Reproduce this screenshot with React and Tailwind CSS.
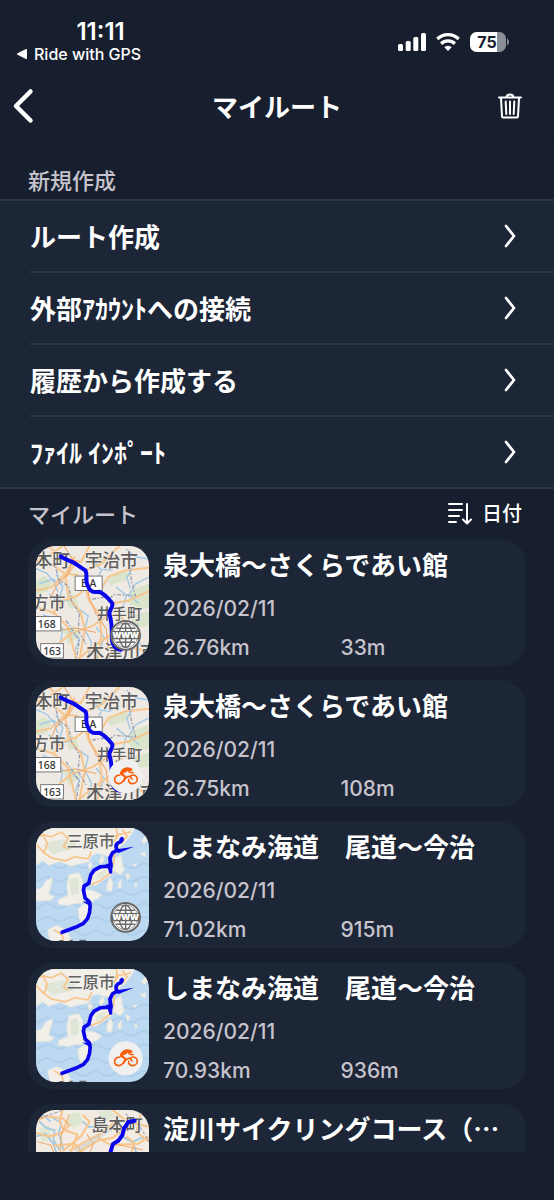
import { useId, useState } from 'react';

const createItems = [
  'ルート作成',
  '外部ｱｶｳﾝﾄへの接続',
  '履歴から作成する',
  'ﾌｧｲﾙ ｲﾝﾎﾟｰﾄ',
];

const routes = [
  {
    id: 1,
    name: '泉大橋〜さくらであい館',
    date: '2026/02/11',
    distance: '26.76km',
    climb: '33m',
    map: 'kizu',
    source: 'web',
  },
  {
    id: 2,
    name: '泉大橋〜さくらであい館',
    date: '2026/02/11',
    distance: '26.75km',
    climb: '108m',
    map: 'kizu',
    source: 'bike',
  },
  {
    id: 3,
    name: 'しまなみ海道　尾道〜今治',
    date: '2026/02/11',
    distance: '71.02km',
    climb: '915m',
    map: 'shimanami',
    source: 'web',
  },
  {
    id: 4,
    name: 'しまなみ海道　尾道〜今治',
    date: '2026/02/11',
    distance: '70.93km',
    climb: '936m',
    map: 'shimanami',
    source: 'bike',
  },
  {
    id: 5,
    name: '淀川サイクリングコース（…',
    map: 'yodo',
  },
];

function StatusBar() {
  return (
    <div className="flex items-start justify-between pt-4.5 pl-4 pr-11 font-['Inter','Noto_Sans_CJK_JP',sans-serif]">
      <div className="flex flex-col">
        <span className="text-center pl-11 text-2xl leading-7 font-semibold">11:11</span>
        <a href="#back-to-app" className="flex items-center gap-1.5 text-base leading-4 font-medium">
          <svg className="w-3 h-3" viewBox="0 0 12 12" fill="currentColor" aria-hidden="true">
            <path d="M1.500 5.200 10 1.100q1-.4 1 .7v8.400q0 1.100-1 .7L1.500 6.800q-1.300-.8 0-1.600z" />
          </svg>
          Ride with GPS
        </a>
      </div>
      <div className="flex items-center gap-2.5 pt-3.5">
        <svg className="w-7 h-5" viewBox="0 0 28 20" fill="currentColor" aria-hidden="true">
          <rect x="0" y="12" width="5" height="7" rx="1.500" />
          <rect x="7.700" y="9" width="5" height="10" rx="1.500" />
          <rect x="15.300" y="5" width="5" height="14" rx="1.500" />
          <rect x="23" y="1" width="5" height="18" rx="1.500" />
        </svg>
        <svg className="w-6 h-5" viewBox="0 0 24 20" fill="none" stroke="currentColor" strokeWidth="3.400" aria-hidden="true">
          <path d="M1.300 7a15.200 15.200 0 0 1 21.400 0" />
          <path d="M5.200 11.700a9.600 9.600 0 0 1 13.600 0" />
          <path d="M12 18.900 8.300 15.200a5.300 5.300 0 0 1 7.400 0z" fill="currentColor" stroke="none" />
        </svg>
        <svg className="w-10 h-5" viewBox="0 0 40 20" aria-hidden="true">
          <path d="M27 0h2.500a6.500 6.500 0 0 1 6.500 6.500v7a6.500 6.500 0 0 1-6.500 6.500H27z" fill="#8b8f98" />
          <path d="M6.500 0H27v20H6.500A6.500 6.500 0 0 1 0 13.500v-7A6.500 6.500 0 0 1 6.500 0z" fill="#fff" />
          <path d="M37 6.500q2 1 2 3.500t-2 3.500z" fill="#8b8f98" />
          <text x="17" y="16" textAnchor="middle" fontSize="16" fontWeight="700" fill="#171f2f">
            75
          </text>
        </svg>
      </div>
    </div>
  );
}

function Header() {
  return (
    <header className="flex items-center justify-between h-16 px-3 mt-3">
      <button type="button" aria-label="戻る" className="w-12">
        <svg className="w-6 h-9" viewBox="0 0 24 36" fill="none" stroke="currentColor" strokeWidth="4.500" strokeLinecap="round" strokeLinejoin="round">
          <path d="M18.500 3.500 4 18l14.500 14.500" />
        </svg>
      </button>
      <h1 className="text-[26px] leading-9 font-bold">マイルート</h1>
      <button type="button" aria-label="削除" className="flex justify-end w-12 pr-5">
        <svg className="w-6 h-6.5 shrink-0" viewBox="0 0 24 26" fill="none" stroke="currentColor" strokeWidth="2" strokeLinecap="round" strokeLinejoin="round">
          <path d="M1 4.500h22M8.500 4c.5-3.500 6.500-3.500 7 0M3 5l1 18.500q.1 1 1.200 1h13.600q1.100 0 1.200-1L21 5" />
          <path d="m7.700 8.500.6 12.500M12 8.500V21M16.300 8.500 15.700 21" />
        </svg>
      </button>
    </header>
  );
}

function CreateRow({ label, last }) {
  return (
    <li className="pl-7.5">
      <button
        type="button"
        className={`flex items-center justify-between w-full pr-9.5 text-[26px] leading-9 font-bold text-left ${
          last ? 'h-17.5' : 'h-18 border-b-2 border-[#2b3646]'
        }`}
      >
        {label}
        <svg className="w-3 h-6" viewBox="0 0 12 24" fill="none" stroke="currentColor" strokeWidth="2.800" strokeLinecap="round" strokeLinejoin="round" aria-hidden="true">
          <path d="M2 2l8 10-8 10" />
        </svg>
      </button>
    </li>
  );
}

function RoadSign({ x, y, width, label }) {
  return (
    <g>
      <rect x={x} y={y} width={width} height="43" fill="#fff" stroke="#777" strokeWidth="3" />
      <text x={x + width / 2} y={y + 33} textAnchor="middle" fontSize="31" fontWeight="500" fill="#333" fontFamily="Noto Sans">
        {label}
      </text>
    </g>
  );
}

function KizuMap() {
  return (
    <g>
      <rect x="50" y="47" width="338" height="338" fill="#efe9e3" />
      <g fill="#d9e4cb">
        <path d="M262 150l40-28 36 8-20 20-46 14zM330 180l58-20v70l-40 10-24-26zM50 150l24-14 24 20-16 28-32 8zM214 86l30-12 18 20-30 18zM130 296l34-10 18 30-34 26z" />
        <path d="M330 256l58-12v40l-40 8zM140 190l30 6 8 34-30 4z" />
      </g>
      <g fill="none" stroke="#9fc8e6" strokeWidth="4">
        <path d="M50 114l34 16 20 26 12 30M110 130l20 40-12 40M60 160l40-14 30 20M222 92l20 24 30 4 26-20M246 120l-16 30 14 20" />
        <path d="M320 56l30 24 38 6M340 110l-18 30 10 34M388 140l-40 20-20 34 30 26M290 170l30 24-8 30M70 252l40 14 20 30-10 60" />
        <path d="M180 236l26 20-10 40 20 40-12 50M150 300l30 24-14 40M356 280l-18 24 26 40 24 8M230 290l24 30-14 40M88 190l30 26 34-8" />
      </g>
      <g fill="none" stroke="#f6c68e" strokeWidth="6">
        <path d="M50 92l44-20 36-25M86 47l44 36 54 12 26-48M50 180l46-10 44-42 26-50M168 98l-30 44 10 60 36 44 12 52-16 87" />
        <path d="M198 120l44-18 58-55M206 168l-36 30-46 14-24 40M192 150l16 60 30 40 8 60-12 75M278 218l50-8 60-28M240 184l26-44 50-20 72-8" />
        <path d="M50 230l54 16 42 44 24 95M270 252l-50 34-60 20-40 30M277 310l-60 40-40 35M300 250l30 50-8 50 66 10M96 100l40 30 40 4" />
      </g>
      <g fill="none" stroke="#f0a463" strokeWidth="3">
        <path d="M134 47l26 40-12 40-38 40-18 40M160 87l40 34 8 76 22 54 30 44 10 90M110 300l60-8 60 14" />
      </g>
      <g fill="none" stroke="#9c9db2" strokeWidth="4" strokeDasharray="12 5 4 5">
        <path d="M104 92l14 56 30 20 8 42 24 40-4 50 24 40M330 112l6 40 12 44-64-4-18 14M140 270l40 60-10 55M350 300l-26 40M218 206l50-8" />
      </g>
      <g fill="#5e5e5e" fontSize="53" fontWeight="500" fontFamily="Noto Sans CJK JP" stroke="#f6f3ef" strokeWidth="3" paintOrder="stroke">
        <text x="46" y="109">本町</text>
        <text x="196" y="109">宇治市</text>
        <text x="38" y="234" fontSize="50">方市</text>
        <text x="232" y="264" fontSize="45">井手町</text>
        <text x="200" y="382" fontSize="54">木津川市</text>
      </g>
      <RoadSign x={167} y={137} width={81} label="E A" />
      <RoadSign x={40} y={258} width={84} label="168" />
      <RoadSign x={64} y={339} width={68} label="163" />
      <path
        d="M124 78C140 90 156 92 168 100S188 114 198 120C206 136 194 148 206 168 210 182 222 187 240 184 256 190 268 206 278 218 282 232 266 240 270 252S277 290 277 315C275 340 286 356 304 357"
        fill="none"
        stroke="#0a05ea"
        strokeWidth="12"
        strokeLinecap="round"
        strokeLinejoin="round"
      />
    </g>
  );
}

function ShimanamiMap() {
  return (
    <g transform="translate(0 5)">
      <rect x="50" y="42" width="338" height="338" fill="#bdd9f1" />
      <g fill="none" stroke="#afcfea" strokeWidth="6">
        {[155, 195, 235, 275, 315, 355].map((y) => (
          <path key={y} d={`M30 ${y}q18 14 36 0t36 0q18 14 36 0t36 0q18 14 36 0t36 0q18 14 36 0t36 0q18 14 36 0t36 0`} />
        ))}
      </g>
      <g fill="#f1efe7" stroke="#e3e4dc" strokeWidth="2">
        <path d="M50 42h296l-12 22-20 24-28 22-16 18-36-10-18 6-8 20-56 12-30-14-34 12-18-14-20 14z" />
        <path d="M50 226l16-4 14-22 20-10-4 20-8 30 18 8-14 10-42 2z" />
        <path d="M148 182l30-6 12 22-4 30 12 16-6 22-24 2-24 6-28-4 2-14 28-12-4-26z" />
        <path d="M214 190l14-20 30-10 26 2-4 16-30 22-22 14-18-4zM284 134l20-12 4 24 6 22-12 14-20-12z" />
        <path d="M196 226l28 4 22 12-8 10-22 10-18-14zM176 282l20-14 20 10 0 24-12 16-18 14-8-24z" />
        <path d="M262 210l10-22 8 18-4 26-14-4zM296 206l10-10-2 28-8-4zM318 178l14 6-8 16zM338 152l14-4-4 10zM362 120l14-8 2 16zM205 152l8-8 6 8-8 14z" />
        <path d="M84 346l28-12 30 14 16 32H92zM366 78l12-12 6 14-12 8zM238 142l12-20 4 18-10 12zM346 208l6 0v10h-6z" />
      </g>
      <path d="M150 196l22-8 8 20-4 30-20 6zM70 90l60-14 40 10-10 20-60 14zM232 178l30-10-8 20-24 10z" fill="#dfe6d8" />
      <g fill="none" stroke="#f8c48a" strokeWidth="5">
        <path d="M50 90l24 26 24 16 40 8 28-12 40 6 10-22M50 72l20-10 26 6 30-14 20 20-14 22 14 10M74 116l10-28-14-26" />
        <path d="M270 74l24-12 40-8M290 42l4 24-14 20M308 46l14 20-16 22M212 212l30-12 36-28M296 92l-12 28-2 34M196 326l12-22M104 346l24 16 4 16" />
      </g>
      <text x="142" y="100" fontSize="48" fontWeight="500" fill="#626262" fontFamily="Noto Sans CJK JP" stroke="#f6f3ef" strokeWidth="3" paintOrder="stroke">
        三原市
      </text>
      <path
        d="M307 74l-4 9c-12 3-18 12-10 25l-14 8-8 16 3 24-32 2-18 10-10 14-6 25-14 9-2 12 5 24 12 10 3 14-2 20-6 17-12 14-24 12-40 15"
        fill="none"
        stroke="#0a05ea"
        strokeWidth="11"
        strokeLinecap="round"
        strokeLinejoin="round"
      />
      <path d="M343 98l-46 7-8 7 8 5zM259 150l20-4-1 32-8 1-4-13zM188 262l28 2-2 12z" fill="#0a05ea" />
      <path d="M300 72l12 0 0 10-10 4z" fill="#0a05ea" />
      <g stroke="#666" strokeWidth="4">
        <path d="M120 379h12M150 378h10M180 378h20" />
      </g>
    </g>
  );
}

function YodoMap() {
  return (
    <g transform="translate(0 -418)">
      <rect x="50" y="465" width="338" height="338" fill="#f1ebe4" />
      <g fill="#dde6d0">
        <path d="M148 480l30-10 14 34-26 12-26-4zM234 470l36-5 18 20-34 14zM60 520l30-8 6 40-30 10z" />
      </g>
      <g fill="none" stroke="#9fc8e2" strokeWidth="5">
        <path d="M50 544l28-8 24 30 10 30M60 500l20 18 26 8-4 28 18 30M70 480l24 20M340 560l26-12 22 6M96 486l30 18-8 30 14 50" />
        <path d="M190 500l18 16 30-4M300 540l40 22 10 30" />
      </g>
      <g fill="none" stroke="#f8c48a" strokeWidth="6">
        <path d="M50 500l30-16 50 6 20 20-24 24-36 10-40-10M130 465l-10 34 14 26 40 14-20 50M190 480l20 20-24 42-56 46M150 588l50-30 40-20 42-34" />
        <path d="M176 592l60-36 44-8 40-34M280 465l40 34 68 16M240 510l-4 40 40 20 80-4 32-22M320 544l24 20-8 28M366 470l-16 60 38 30M100 572l66-6 24 24" />
      </g>
      <g fill="none" stroke="#f1aa6a" strokeWidth="3">
        <path d="M54 560l40 10 10 24M150 478l-24 60-4 54M202 538l20 26-10 26M300 570l70 14" />
      </g>
      <path d="M170 586l110-68" stroke="#c9c9c9" strokeWidth="12" strokeDasharray="3 3" />
      <path d="M62 488l40-12 26-10M318 476l40 34 30 50" fill="none" stroke="#a0a1b4" strokeWidth="3" strokeDasharray="10 5" />
      <text x="216" y="528" fontSize="51" fontWeight="500" fill="#5e5e5e" fontFamily="Noto Sans CJK JP" stroke="#f6f3ef" strokeWidth="3" paintOrder="stroke">
        島本町
      </text>
      <path
        d="M345 497l-19 4-12 18-6 22-12 16-16 10-9 30"
        fill="none"
        stroke="#0a05ea"
        strokeWidth="12"
        strokeLinecap="round"
        strokeLinejoin="round"
      />
    </g>
  );
}

function WebBadge() {
  return (
    <g>
      <circle cx="318" cy="314" r="43" fill="#fff" stroke="#686868" strokeWidth="6" />
      <g fill="none" stroke="#686868" strokeWidth="4">
        <circle cx="318" cy="314" r="37" strokeWidth="2" />
        <ellipse cx="318" cy="314" rx="19" ry="36" />
        <path d="M318 278v72M290 293h56M290 335h56" />
      </g>
      <rect x="276" y="301" width="84" height="25" fill="#686868" />
      <text x="318" y="323" textAnchor="middle" fontSize="30" fontWeight="900" fill="#fff" fontFamily="Inter">
        www
      </text>
    </g>
  );
}

function BikeBadge() {
  return (
    <g>
      <circle cx="318" cy="314" r="51" fill="#eff0ef" />
      <g fill="none" stroke="#fb5f0c" strokeWidth="5" strokeLinecap="round" strokeLinejoin="round">
        <path d="M300 311c-10-1-15 6-15 13 0 8 7 13 15 12 11-2 14-18 25-21 7-2 10 2 12 7" />
        <path d="M333 313c9-6 20-1 20 9 0 8-6 14-14 14s-13-6-12-13" />
        <path d="M303 307l14 8-5 13" />
        <path d="M304 304c3-8 10-14 20-14l6 12 10 1" />
      </g>
      <path d="M301 306c2-10 11-18 24-18l3 7-9 7-9 4 6 5-4 4z" fill="#fb5f0c" />
      <ellipse cx="331" cy="293" rx="8" ry="5" transform="rotate(15 331 293)" fill="#fb5f0c" />
    </g>
  );
}

function RouteThumb({ map, source }) {
  const clipId = useId();

  return (
    <svg className="w-[113px] h-[113px] shrink-0" viewBox="50 47 338 338" aria-hidden="true">
      <clipPath id={clipId}>
        <rect x="50" y="47" width="338" height="338" rx="58" />
      </clipPath>
      <g clipPath={`url(#${clipId})`}>
        {map === 'kizu' && <KizuMap />}
        {map === 'shimanami' && <ShimanamiMap />}
        {map === 'yodo' && <YodoMap />}
        {source === 'web' && <WebBadge />}
        {source === 'bike' && <BikeBadge />}
      </g>
    </svg>
  );
}

function RouteCard({ route }) {
  return (
    <li className="ml-5.5 pl-1.5 pr-7 pb-3.5 border-t border-[#1a2333]">
      <a href={`#route-${route.id}`} className="flex gap-3.5 px-2 py-1.5 rounded-3xl bg-[#1c2637]">
        <RouteThumb map={route.map} source={route.source} />
        <div className="flex-1 min-w-0 space-y-[15px]">
          <h3 className="text-[26px] leading-9 font-bold truncate">{route.name}</h3>
          {route.date && (
            <>
              <p className="text-[21px] leading-6 font-medium text-[#c6c3cc] font-['Inter',sans-serif]">{route.date}</p>
              <div className="grid grid-cols-2 text-[21px] leading-6 font-medium text-[#c6c3cc] font-['Inter',sans-serif]">
                <span>{route.distance}</span>
                <span>{route.climb}</span>
              </div>
            </>
          )}
        </div>
      </a>
    </li>
  );
}

function App() {
  const [newestFirst, setNewestFirst] = useState(true);
  const sorted = newestFirst ? routes : [...routes].reverse();

  return (
    <div lang="ja" className="flex flex-col h-screen bg-[#171f2f] text-white font-['Noto_Sans_CJK_JP',sans-serif]">
      <StatusBar />
      <Header />
      <main className="flex flex-col flex-1 min-h-0 border-t border-[#131a29]">
        <h2 className="pt-6 pb-1 pl-7 text-[22px] leading-8 font-medium text-[#c6c3cc]">新規作成</h2>
        <ul className="border-y-2 border-[#2b3646] bg-[#1c2637]">
          {createItems.map((label, i) => (
            <CreateRow key={label} label={label} last={i === createItems.length - 1} />
          ))}
        </ul>
        <div className="flex items-center justify-between pt-2 pb-2.5 pl-7 pr-8">
          <h2 className="text-[22px] leading-8 font-medium text-[#c6c3cc]">マイルート</h2>
          <button
            type="button"
            className="flex items-center gap-2.5 text-xl leading-8 font-medium"
            onClick={() => setNewestFirst(!newestFirst)}
          >
            <svg className="w-6 h-6" viewBox="0 0 24 24" fill="none" stroke="currentColor" strokeWidth="2" strokeLinecap="round" strokeLinejoin="round" aria-hidden="true">
              <path d="M1 3h13M1 9h13M1 15h10M1 21h7M19 3v19M15 18.500l4 4 4-4" />
            </svg>
            日付
          </button>
        </div>
        <ul className="flex-1 min-h-0 overflow-y-auto [scrollbar-width:none]">
          {sorted.map((route) => (
            <RouteCard key={route.id} route={route} />
          ))}
        </ul>
      </main>
      <div className="h-12 shrink-0" />
    </div>
  );
}

export default App;
